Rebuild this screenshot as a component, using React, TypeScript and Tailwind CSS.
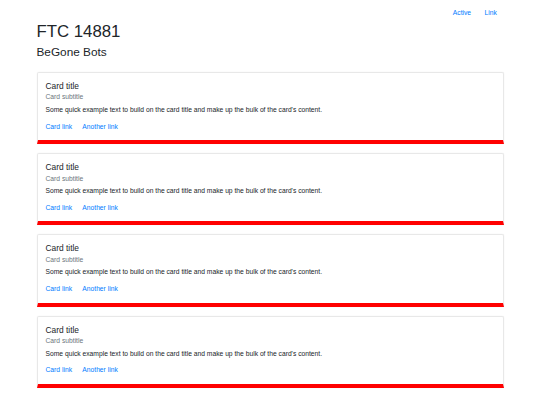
import React from 'react';

const cards = [1, 2, 3, 4];

function Card() {
  return (
    <div className="rounded-t-[2px] border border-[#e8e8e8] border-b-[4px] border-b-[#ff0000] bg-white shadow-[0_0_2px_rgba(0,0,0,0.05)]">
      <div className="px-[8px] pt-[8px] pb-[8.4px]">
        <h5 className="mb-[2.5px] text-[8.4px] leading-[1.2] text-[#212529]">Card title</h5>
        <h6 className="mb-[3.4px] text-[6.72px] leading-[1.2] text-[#6c757d]">Card subtitle</h6>
        <p className="mb-[6.7px] text-[6.72px] leading-[1.5] text-[#212529]">
          Some quick example text to build on the card title and make up the bulk of the card's content.
        </p>
        <div className="flex gap-[10.3px] text-[6.72px] leading-[1.5] text-[#007bff]">
          <a href="#">Card link</a>
          <a href="#">Another link</a>
        </div>
      </div>
    </div>
  );
}

export default function App() {
  return (
    <div className="min-h-screen bg-white font-['Liberation_Sans',Arial,sans-serif] text-[#212529]">
      <div className="mx-auto w-[467px]">
        {/* nav */}
        <nav className="flex justify-end pt-[5px]">
          <a href="#" className="px-[6.7px] py-[3.4px] text-[6.72px] leading-[1.5] text-[#007bff]">Active</a>
          <a href="#" className="px-[6.7px] py-[3.4px] text-[6.72px] leading-[1.5] text-[#007bff]">Link</a>
        </nav>

        <h1 className="mb-[3.4px] text-[16.8px] leading-[1.2] font-normal">FTC 14881</h1>
        <h3 className="mb-[12.3px] text-[11.8px] leading-[1.2] font-normal">BeGone Bots</h3>

        <div className="flex flex-col gap-[9px]">
          {cards.map((c) => (
            <Card key={c} />
          ))}
        </div>
      </div>
    </div>
  );
}
